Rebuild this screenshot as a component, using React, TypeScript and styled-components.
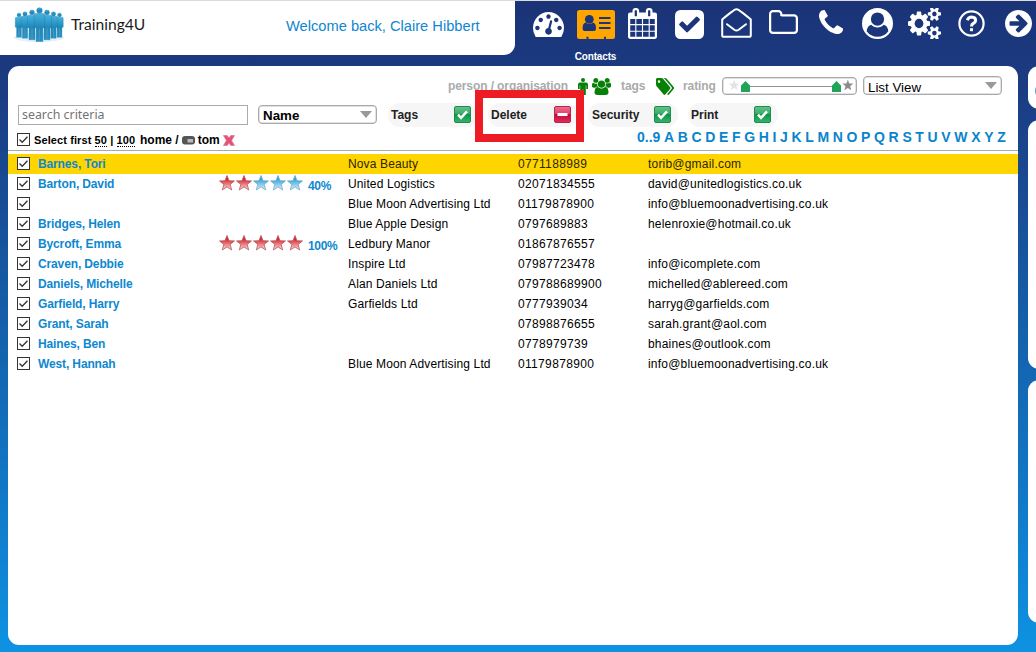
import React from 'react';
import styled, { createGlobalStyle } from 'styled-components';

const GlobalStyle = createGlobalStyle`
  * { box-sizing: border-box; }
  html, body { margin: 0; padding: 0; }
  body { font-family: 'Liberation Sans', Arial, sans-serif; font-size: 12px; color: #000; overflow: hidden; }
`;

const Page = styled.div`
  width: 1036px;
  height: 652px;
  overflow: hidden;
  display: flex;
  flex-direction: column;
  border-top: 1px solid #dcdcdc;
  background: linear-gradient(180deg, #1b3377 0%, #1b3c83 14%, #1461ac 51%, #1178c6 75%, #0e92e2 100%);
`;

const Header = styled.header`
  display: flex;
  height: 65px;
  flex: none;
`;

const BrandBar = styled.div`
  display: flex;
  flex: none;
  align-items: flex-start;
  width: 515px;
  height: 54px;
  padding-left: 12px;
  background: #fff;
  border-bottom-right-radius: 11px;
`;

const BrandName = styled.div`
  width: 219px;
  padding: 13px 0 0 4px;
  font-family: Lato, 'Liberation Sans', sans-serif;
  font-size: 15.6px;
  line-height: 20px;
  color: #1c1c1c;
`;

const Welcome = styled.div`
  padding-top: 16px;
  font-size: 14.67px;
  line-height: 18px;
  color: #0f86cf;
  white-space: nowrap;
`;

const Nav = styled.nav`
  display: flex;
  padding-left: 10px;
`;

const NavItem = styled.a<{ $active?: boolean }>`
  width: 47px;
  flex: none;
  display: flex;
  flex-direction: column;
  align-items: center;
  color: ${(p) => (p.$active ? '#ffa500' : '#fff')};
`;

const NavIcon = styled.span<{ $top: number }>`
  display: block;
  height: 50px;
  padding-top: ${(p) => p.$top}px;
  svg { display: block; }
`;

const NavLabel = styled.span`
  font-size: 10px;
  font-weight: bold;
  line-height: 12px;
  letter-spacing: -0.15px;
  color: #fff;
`;

const Body = styled.div`
  display: flex;
  gap: 10px;
  padding-left: 8px;
`;

const Panel = styled.main`
  width: 1010px;
  height: 579px;
  flex: none;
  background: #fff;
  border-radius: 11px;
`;

const Side = styled.aside`
  display: flex;
  flex-direction: column;
  gap: 11px;
`;

const SideCard = styled.div<{ $h: number }>`
  width: 60px;
  height: ${(p) => p.$h}px;
  background: #fff;
  border-radius: 11px;
`;

const SideMark = styled.div`
  width: 16px;
  height: 16px;
  margin: 17px 0 0 7px;
  border: 2px solid #5d9cc4;
  border-radius: 8px;
`;

const FilterRow = styled.div`
  display: flex;
  align-items: flex-start;
  height: 33px;
  padding-left: 440px;
`;

const FilterLabel = styled.span<{ $w: number }>`
  width: ${(p) => p.$w}px;
  flex: none;
  padding-top: 13px;
  font-weight: bold;
  line-height: 14px;
  letter-spacing: -0.1px;
  color: #aaa;
  white-space: nowrap;
`;

const FilterIcon = styled.span<{ $w: number }>`
  width: ${(p) => p.$w}px;
  flex: none;
  padding-top: 12px;
  color: #078007;
  svg { display: block; }
`;

const SelectBox = styled.div<{ $w: number; $top?: number; $bold?: boolean }>`
  width: ${(p) => p.$w}px;
  flex: none;
  height: 19px;
  margin-top: ${(p) => p.$top || 0}px;
  padding: 1px 4px 0;
  display: flex;
  justify-content: space-between;
  border: 1px solid #a9a9a9;
  border-radius: 4px;
  box-shadow: inset 0 0 0 0.5px #c4c4c4;
  font-size: 13.33px;
  line-height: ${(p) => (p.$bold ? 18 : 19)}px;
  font-weight: ${(p) => (p.$bold ? 'bold' : 'normal')};
`;

const Caret = styled.span`
  width: 0;
  height: 0;
  margin: 4px 0 0;
  border-left: 6px solid transparent;
  border-right: 6px solid transparent;
  border-top: 7px solid #999;
`;

const Slider = styled.div`
  width: 135px;
  flex: none;
  height: 18px;
  margin: 11px 6px 0 0;
  border: 1px solid #a9a9a9;
  border-radius: 4px;
  box-shadow: inset 0 0 0 0.5px #c4c4c4;
  svg { display: block; }
`;

const Toolbar = styled.div`
  position: relative;
  display: flex;
  align-items: center;
  height: 31px;
  padding-left: 10px;
`;

const Search = styled.div`
  width: 230px;
  height: 20px;
  margin-right: 10px;
  padding-left: 3px;
  border: 1px solid #ababab;
  font-family: 'Noto Sans', 'Open Sans', sans-serif;
  font-size: 12.4px;
  line-height: 18px;
  color: #757575;
`;

const Action = styled.div<{ $first?: boolean; $indent?: number }>`
  display: flex;
  align-items: center;
  justify-content: space-between;
  width: 90px;
  height: 24px;
  margin-left: ${(p) => (p.$first ? 11 : 10)}px;
  padding: 0 7px 0 ${(p) => p.$indent || 3}px;
  border-radius: 12px;
  background: #f6f6f6;
  font-weight: bold;
  color: #222;
  svg { display: block; }
`;

const Highlight = styled.div`
  position: absolute;
  left: 467px;
  top: -9px;
  width: 109px;
  height: 52px;
  border: 8px solid #ed1c24;
`;

const SelectRow = styled.div`
  display: flex;
  height: 21px;
  padding-left: 9px;
  border-bottom: 1px solid #a8a8a8;
  font-weight: bold;
  line-height: 20px;
  white-space: nowrap;
`;

const SelectFirst = styled.div`
  width: 110px;
  flex: none;
  padding-left: 4px;
  font-size: 11px;
  letter-spacing: 0.1px;
  u { text-decoration: none; border-bottom: 1px dotted #000; }
`;

const Crumbs = styled.div`
  display: flex;
  flex: none;
  align-items: center;
  gap: 3px;
  width: 497px;
`;

const Letters = styled.div`
  display: flex;
  flex: none;
  justify-content: space-between;
  width: 369px;
  margin-top: -3px;
  font-size: 14px;
  color: #0a84cc;
`;

const List = styled.div`
  margin-top: 3px;
`;

const Row = styled.div<{ $selected?: boolean }>`
  display: grid;
  grid-template-columns: 21px 181px 89px 40px 170px 130px 1fr;
  height: 20px;
  padding-left: 9px;
  line-height: 20px;
  white-space: nowrap;
  background: ${(p) => (p.$selected ? '#ffd500' : 'transparent')};
  color: ${(p) => (p.$selected ? '#2b2500' : '#000')};
`;

const Check = styled.span`
  display: block;
  width: 13px;
  height: 13px;
  margin-top: 3px;
  flex: none;
  svg { display: block; }
`;

const Name = styled.span`
  font-weight: bold;
  letter-spacing: -0.13px;
  color: #0d88d0;
`;

const Cell = styled.span<{ $track: number }>`
  letter-spacing: ${(p) => p.$track}px;
`;

const Percent = styled(Name)`
  line-height: 24px;
  letter-spacing: -0.3px;
`;

const Stars = styled.span`
  display: flex;
  gap: 1px;
  padding-top: 1px;
`;

type GlyphProps = { w: number; h: number; box: string; d: string };
const Glyph = ({ w, h, box, d }: GlyphProps) => (
  <svg width={w} height={h} viewBox={box} preserveAspectRatio="none" fill="currentColor"><path fillRule="evenodd" d={d} /></svg>
);

const TACH = 'M384 1152q0-53-37.5-90.5t-90.5-37.5-90.5 37.5-37.5 90.5 37.5 90.5 90.5 37.5 90.5-37.5 37.5-90.5zm192-448q0-53-37.5-90.5t-90.5-37.5-90.5 37.5-37.5 90.5 37.5 90.5 90.5 37.5 90.5-37.5 37.5-90.5zm428 481l101-382q6-26-7.5-48.5t-38.5-29.5-48 6.5-30 39.5l-101 382q-60 5-107 43.5t-63 98.5q-20 77 20 146t117 89 146-20 89-117q16-60-6-117t-72-91zm660-33q0-53-37.5-90.5t-90.5-37.5-90.5 37.5-37.5 90.5 37.5 90.5 90.5 37.5 90.5-37.5 37.5-90.5zm-640-640q0-53-37.5-90.5t-90.5-37.5-90.5 37.5-37.5 90.5 37.5 90.5 90.5 37.5 90.5-37.5 37.5-90.5zm448 192q0-53-37.5-90.5t-90.5-37.5-90.5 37.5-37.5 90.5 37.5 90.5 90.5 37.5 90.5-37.5 37.5-90.5zm320 448q0 261-141 483-19 29-54 29h-1402q-35 0-54-29-141-221-141-483 0-182 71-348t191-286 286-191 348-71 348 71 286 191 191 286 71 348z';
const CAL = 'M192 1664h288v-288h-288v288zm352 0h320v-288h-320v288zm-352-352h288v-320h-288v320zm352 0h320v-320h-320v320zm-352-384h288v-288h-288v288zm736 736h320v-288h-320v288zm-384-736h320v-288h-320v288zm768 736h288v-288h-288v288zm-384-352h320v-320h-320v320zm-352-864v-288q0-13-9.5-22.5t-22.5-9.5h-64q-13 0-22.5 9.5t-9.5 22.5v288q0 13 9.5 22.5t22.5 9.5h64q13 0 22.5-9.5t9.5-22.5zm736 864h288v-320h-288v320zm-384-384h320v-288h-320v288zm384 0h288v-288h-288v288zm32-480v-288q0-13-9.5-22.5t-22.5-9.5h-64q-13 0-22.5 9.5t-9.5 22.5v288q0 13 9.5 22.5t22.5 9.5h64q13 0 22.5-9.5t9.5-22.5zm384-64v1280q0 52-38 90t-90 38h-1408q-52 0-90-38t-38-90v-1280q0-52 38-90t90-38h128v-96q0-66 47-113t113-47h64q66 0 113 47t47 113v96h384v-96q0-66 47-113t113-47h64q66 0 113 47t47 113v96h128q52 0 90 38t38 90z';
const CHECKSQ = 'M813 1299l614-614q19-19 19-45t-19-45l-102-102q-19-19-45-19t-45 19l-467 467-211-211q-19-19-45-19t-45 19l-102 102q-19 19-19 45t19 45l358 358q19 19 45 19t45-19zm851-883v960q0 119-84.5 203.5t-203.5 84.5h-960q-119 0-203.5-84.5t-84.5-203.5v-960q0-119 84.5-203.5t203.5-84.5h960q119 0 203.5 84.5t84.5 203.5z';
const FOLDER = 'M1600 1312v-704q0-40-28-68t-68-28h-704q-40 0-68-28t-28-68v-64q0-40-28-68t-68-28h-320q-40 0-68 28t-28 68v960q0 40 28 68t68 28h1216q40 0 68-28t28-68zm128-704v704q0 92-66 158t-158 66h-1216q-92 0-158-66t-66-158v-960q0-92 66-158t158-66h320q92 0 158 66t66 158v32h672q92 0 158 66t66 158z';
const PHONE = 'M1600 1240q0 27-10 70.5t-21 68.5q-21 50-122 106-94 51-186 51-27 0-53-3.5t-57.5-12.5-47-14.5-55.5-20.5-49-18q-98-35-175-83-127-79-264-216t-216-264q-48-77-83-175-3-9-18-49t-20.5-55.5-14.5-47-12.5-57.5-3.5-53q0-92 51-186 56-101 106-122 25-11 68.5-21t70.5-10q14 0 21 3 18 6 53 76 11 19 30 54t35 63.5 31 53.5q3 4 17.5 25t21.5 35.5 7 28.5q0 20-28.5 50t-62 55-62 53-28.5 46q0 9 5 22.5t8.5 20.5 14 24 11.5 19q76 137 174 235t235 174q2 1 19 11.5t24 14 20.5 8.5 22.5 5q18 0 46-28.5t53-62 55-62 50-28.5q14 0 28.5 7t35.5 21.5 25 17.5q25 15 53.5 31t63.5 35 54 30q70 35 76 53 3 7 3 21z';
const USER = 'M1523 1339q-22-155-87.5-257.5t-184.5-118.5q-67 74-159.5 115.5t-195.5 41.5-195.5-41.5-159.5-115.5q-119 16-184.5 118.5t-87.5 257.5q106 150 271 237.5t356 87.5 356-87.5 271-237.5zm-243-699q0-159-112.5-271.5t-271.5-112.5-271.5 112.5-112.5 271.5 112.5 271.5 271.5 112.5 271.5-112.5 112.5-271.5zM896 0a896 896 0 1 0 0 1792a896 896 0 1 0 0-1792z';
const COGS = 'M832 896q0-106-75-181t-181-75-181 75-75 181 75 181 181 75 181-75 75-181zm768 512q0-52-38-90t-90-38-90 38-38 90q0 53 37.5 90.5t90.5 37.5 90.5-37.5 37.5-90.5zm0-1024q0-52-38-90t-90-38-90 38-38 90q0 53 37.5 90.5t90.5 37.5 90.5-37.5 37.5-90.5zm-384 421v185q0 10-7 19.5t-16 10.5l-155 24q-11 35-32 76 34 48 90 115 7 11 7 20 0 12-7 19-23 30-82.5 89.5t-78.5 59.5q-11 0-21-7l-115-90q-37 19-77 31-11 108-23 155-7 24-30 24h-186q-11 0-20-7.5t-10-17.5l-23-153q-34-10-75-31l-118 89q-7 7-20 7-11 0-21-8-144-133-144-160 0-9 7-19 10-14 41-53t47-61q-23-44-35-82l-152-24q-10-1-17-9.5t-7-19.5v-185q0-10 7-19.5t16-10.5l155-24q11-35 32-76-34-48-90-115-7-11-7-20 0-12 7-20 22-30 82-89t79-59q11 0 21 7l115 90q34-18 77-32 11-108 23-154 7-24 30-24h186q11 0 20 7.5t10 17.5l23 153q34 10 75 31l118-89q8-7 20-7 11 0 21 8 144 133 144 160 0 8-7 19-12 16-42 54t-45 60q23 48 34 82l152 23q10 2 17 10.5t7 19.5zm640 533v140q0 16-149 31-12 27-30 52 51 113 51 138 0 4-4 7-122 71-124 71-8 0-46-47t-52-68q-20 2-30 2t-30-2q-14 21-52 68t-46 47q-2 0-124-71-4-3-4-7 0-25 51-138-18-25-30-52-149-15-149-31v-140q0-16 149-31 13-29 30-52-51-113-51-138 0-4 4-7 4-2 35-20t59-34 30-16q8 0 46 46.5t52 67.5q20-2 30-2t30 2q51-71 92-112l6-2q4 0 124 70 4 3 4 7 0 25-51 138 17 23 30 52 149 15 149 31zm0-1024v140q0 16-149 31-12 27-30 52 51 113 51 138 0 4-4 7-122 71-124 71-8 0-46-47t-52-68q-20 2-30 2t-30-2q-14 21-52 68t-46 47q-2 0-124-71-4-3-4-7 0-25 51-138-18-25-30-52-149-15-149-31v-140q0-16 149-31 13-29 30-52-51-113-51-138 0-4 4-7 4-2 35-20t59-34 30-16q8 0 46 46.5t52 67.5q20-2 30-2t30 2q51-71 92-112l6-2q4 0 124 70 4 3 4 7 0 25-51 138 17 23 30 52 149 15 149 31z';
const ARROW = 'M1413 896q0-27-18-45l-91-91-362-362q-18-18-45-18t-45 18l-91 91q-18 18-18 45t18 45l189 189h-502q-26 0-45 19t-19 45v128q0 26 19 45t45 19h502l-189 189q-19 19-19 45t19 45l91 91q18 18 45 18t45-18l362-362 91-91q18-18 18-45zm251 0q0 209-103 385.5t-279.5 279.5-385.5 103-385.5-103-279.5-279.5-103-385.5 103-385.5 279.5-279.5 385.5-103 385.5 103 279.5 279.5 103 385.5z';
const USERS = 'M593 896q-162 5-265 128h-134q-82 0-138-40.5t-56-118.5q0-353 124-353 6 0 43.5 21t97.5 42.5 119 21.5q67 0 133-23-5 37-5 66 0 159 93 287zm1071 637q0 120-73 189.5t-194 69.5h-874q-121 0-194-69.5t-73-189.5q0-53 3.5-103.5t14-109 26.5-108.5 43-97.5 62-81 85.5-53.5 111.5-20q10 0 43 21.5t73 48 107 48 135 21.5 135-21.5 107-48 73-48 43-21.5q61 0 111.5 20t85.5 53.5 62 81 43 97.5 26.5 108.5 14 109 3.5 103.5zm-1024-1277q0 106-75 181t-181 75-181-75-75-181 75-181 181-75 181 75 75 181zm704 384q0 159-112.5 271.5t-271.5 112.5-271.5-112.5-112.5-271.5 112.5-271.5 271.5-112.5 271.5 112.5 112.5 271.5zm576 225q0 78-56 118.5t-138 40.5h-134q-103-123-265-128 93-128 93-287 0-29-5-66 66 23 133 23 59 0 119-21.5t97.5-42.5 43.5-21q124 0 124 353zm-128-609q0 106-75 181t-181 75-181-75-75-181 75-181 181-75 181 75 75 181z';
const TAGS = 'M448 448q0-53-37.5-90.5t-90.5-37.5-90.5 37.5-37.5 90.5 37.5 90.5 90.5 37.5 90.5-37.5 37.5-90.5zm1067 576q0 53-37 90l-491 492q-39 37-91 37-53 0-90-37l-715-716q-38-37-64.5-101t-26.5-117v-416q0-52 38-90t90-38h416q53 0 117 26.5t102 64.5l715 714q37 39 37 91zm384 0q0 53-37 90l-491 492q-39 37-91 37-36 0-59-14t-53-45l470-470q37-37 37-90 0-52-37-91l-715-714q-38-38-102-64.5t-117-26.5h224q53 0 117 26.5t102 64.5l715 714q37 39 37 91z';

const ContactCard = () => (
  <svg width="38" height="29" viewBox="0 0 38 29">
    <path fill="#ffa500" d="M2.5 0h33A2.5 2.5 0 0 1 38 2.500V26.500A2.500 2.500 0 0 1 35.500 29H29v-2.200h-2V29H11.500v-2.200h-2V29h-7A2.500 2.500 0 0 1 0 26.500v-24A2.500 2.500 0 0 1 2.500 0z" />
    <g fill="#1b3579">
      <circle cx="12.300" cy="9.300" r="4.400" />
      <path d="M8.600 12.600q3.700 3 7.400 0 3 .8 3 5.600 0 2.800-2.300 2.800H8q-2.400 0-2.400-2.800 0-4.800 3-5.600z" />
      <path d="M22 7h11.500v2H22zM22 12h11.500v2H22zM22 17h11.500v2H22z" />
    </g>
  </svg>
);

const OpenEnvelope = () => (
  <svg width="31" height="30" viewBox="0 0 31 30" fill="none" stroke="currentColor" strokeWidth="2" strokeLinejoin="round" strokeLinecap="round">
    <path d="M1.200 11.500C5 8 9 5.200 13.200 2q2.300-1.700 4.600 0C22 5.200 26 8 29.800 11.500V27.200q0 1.600-1.600 1.600H2.800q-1.600 0-1.600-1.600z" />
    <path d="M6 16.200l7.300 5.600q2.200 1.600 4.400 0L25 16.200" />
  </svg>
);

const Question = () => (
  <svg width="27" height="27" viewBox="0 0 27 27" fill="none" stroke="currentColor">
    <circle cx="13.500" cy="13.500" r="12.100" strokeWidth="2.200" />
    <path d="M9.300 10.300q1.300-3.200 4.300-3.200 4 .2 4 3.400 0 1.700-2.200 2.900-1.900 1.100-1.900 3" strokeWidth="3" />
    <path d="M12 18.200h3v3h-3z" fill="currentColor" stroke="none" />
  </svg>
);

const navItems: { top: number; active?: boolean; label?: string; icon: React.ReactNode }[] = [
  { top: 11, icon: <Glyph w={31} h={25} box="0 256 1792 1408" d={TACH} /> },
  { top: 9, active: true, label: 'Contacts', icon: <ContactCard /> },
  { top: 7, icon: <Glyph w={29} h={31} box="64 0 1664 1792" d={CAL} /> },
  { top: 9, icon: <Glyph w={29} h={29} box="128 128 1536 1536" d={CHECKSQ} /> },
  { top: 7, icon: <OpenEnvelope /> },
  { top: 9, icon: <Glyph w={29} h={24} box="64 128 1664 1408" d={FOLDER} /> },
  { top: 9, icon: <Glyph w={24} h={24} box="192 128 1408 1408" d={PHONE} /> },
  { top: 7, icon: <Glyph w={31} h={31} box="0 0 1792 1792" d={USER} /> },
  { top: 7, icon: <Glyph w={33} h={31} box="-64 64 1920 1664" d={COGS} /> },
  { top: 9, icon: <Question /> },
  { top: 9, icon: <Glyph w={27} h={27} box="128 128 1536 1536" d={ARROW} /> },
];

const crowd: [number, number, number][] = [
  [7, 14, 0.72], [13, 13, 0.78], [47.500, 14, 0.72], [41.500, 13, 0.78], [20, 11.500, 0.88], [35, 11.500, 0.88], [27.500, 9.500, 1],
];

const CrowdLogo = () => (
  <svg width="55" height="44" viewBox="0 0 55 44">
    <defs>
      <linearGradient id="crowd" x1="0" y1="0" x2="0" y2="1">
        <stop offset="0" stopColor="#45b2dd" />
        <stop offset="0.500" stopColor="#2088ba" />
        <stop offset="1" stopColor="#2a93c6" />
      </linearGradient>
    </defs>
    <ellipse cx="27" cy="36.500" rx="25" ry="4.500" fill="#e3f1f8" />
    {crowd.map(([x, y, s]) => (
      <g key={x} transform={`translate(${x} ${y}) scale(${s})`} fill="url(#crowd)" stroke="#187ba9" strokeWidth="0.400">
        <path d="M-4 3h8q1.200 0 1.200 1.500V17H3.400v14H.2V18h-.4v13h-3.200V17h-1.800V4.500Q-5.200 3-4 3z" />
        <circle cx="0" cy="0" r="2.800" />
      </g>
    ))}
  </svg>
);

const Person = () => (
  <svg width="10" height="17" viewBox="0 0 10 17" fill="currentColor">
    <circle cx="5" cy="2" r="2" />
    <path d="M2 4.500h6q2 0 2 2V11H8.300V7.500h-.5V17H5.300v-5.500h-.6V17H2.200V7.500h-.5V11H0V6.500q0-2 2-2z" />
  </svg>
);

const STAR = 'M8 .5l2 5.200 5.500.2-4.300 3.500 1.500 5.600L8 11.900 3.300 15l1.500-5.600L.5 5.900 6 5.700z';

const StarIcon = ({ on }: { on: boolean }) => (
  <svg width="16" height="16" viewBox="0 0 16 16">
    <defs>
      <linearGradient id={on ? 'starOn' : 'starOff'} x1="0" y1="0" x2="0" y2="1">
        <stop offset="0.250" stopColor={on ? '#d8262c' : '#2fa3dc'} />
        <stop offset="1" stopColor={on ? '#fbe3e1' : '#e6f5fc'} />
      </linearGradient>
    </defs>
    <path d={STAR} fill={on ? 'url(#starOn)' : 'url(#starOff)'} stroke={on ? '#b8575a' : '#6fa9c6'} strokeWidth="0.800" />
  </svg>
);

const ActionIcon = ({ remove }: { remove?: boolean }) => (
  <svg width="17" height="17" viewBox="0 0 17 17">
    <defs>
      <linearGradient id={remove ? 'badgeRed' : 'badgeGreen'} x1="0" y1="0" x2="0" y2="1">
        <stop offset="0" stopColor={remove ? '#ee6f8d' : '#63c38a'} />
        <stop offset="0.450" stopColor={remove ? '#e0446c' : '#3bab69'} />
        <stop offset="0.500" stopColor={remove ? '#c9063c' : '#0a9446'} />
        <stop offset="1" stopColor={remove ? '#dd2f5c' : '#35b56b'} />
      </linearGradient>
    </defs>
    <rect x="0.500" y="0.500" width="16" height="16" rx="1.500" fill={remove ? 'url(#badgeRed)' : 'url(#badgeGreen)'} stroke={remove ? '#b8244c' : '#218a50'} />
    {remove
      ? <path d="M3.500 7h10v3h-10z" fill="#fff" />
      : <path d="M4 8.700l3 3.200 6-6.600" fill="none" stroke="#fff" strokeWidth="2.500" />}
  </svg>
);

const CheckBox = () => (
  <Check>
    <svg width="13" height="13" viewBox="0 0 13 13">
      <rect x="0.500" y="0.500" width="12" height="12" fill="#fff" stroke="#333" />
      <path d="M2.500 6.500l2.700 2.700 5.300-5.500" fill="none" stroke="#333" strokeWidth="1.300" />
    </svg>
  </Check>
);

const SliderTrack = () => (
  <svg width="133" height="16" viewBox="0 0 133 16">
    <path d="M27 8.500h83" stroke="#8f9a8c" />
    <path d={STAR} fill="#e3e3e3" transform="translate(5.500 1.500) scale(.7)" />
    <path d={STAR} fill="#8c8c8c" transform="translate(119 1.300) scale(.73)" />
    <path d="M18 14V7.500L22.500 3 27 7.500V14zM109 14V7.500L113.500 3 118 7.500V14z" fill="#1fa45a" />
  </svg>
);

const KeyTag = () => (
  <svg width="13" height="9" viewBox="0 0 13 9">
    <rect width="13" height="8.500" rx="3" fill="#555" />
    <rect x="5.500" y="3" width="5.500" height="3.500" fill="#bbb" />
  </svg>
);

const Cross = () => (
  <svg width="12" height="11" viewBox="0 0 12 11">
    <path d="M.5.500h3.700L6 3 7.800.5h3.700L8.600 5.500l2.900 5H7.800L6 8l-1.800 2.500H.5l2.900-5z" fill="#e8507a" stroke="#dc7d93" strokeWidth="0.800" />
  </svg>
);

const contacts: { name: string; stars?: number; org?: string; tel: string; mail?: string }[] = [
  { name: 'Barnes, Tori', org: 'Nova Beauty', tel: '0771188989', mail: 'torib@gmail.com' },
  { name: 'Barton, David', stars: 2, org: 'United Logistics', tel: '02071834555', mail: 'david@unitedlogistics.co.uk' },
  { name: '', org: 'Blue Moon Advertising Ltd', tel: '01179878900', mail: 'info@bluemoonadvertising.co.uk' },
  { name: 'Bridges, Helen', org: 'Blue Apple Design', tel: '0797689883', mail: 'helenroxie@hotmail.co.uk' },
  { name: 'Bycroft, Emma', stars: 5, org: 'Ledbury Manor', tel: '01867876557' },
  { name: 'Craven, Debbie', org: 'Inspire Ltd', tel: '07987723478', mail: 'info@icomplete.com' },
  { name: 'Daniels, Michelle', org: 'Alan Daniels Ltd', tel: '079788689900', mail: 'michelled@ablereed.com' },
  { name: 'Garfield, Harry', org: 'Garfields Ltd', tel: '0777939034', mail: 'harryg@garfields.com' },
  { name: 'Grant, Sarah', tel: '07898876655', mail: 'sarah.grant@aol.com' },
  { name: 'Haines, Ben', tel: '0778979739', mail: 'bhaines@outlook.com' },
  { name: 'West, Hannah', org: 'Blue Moon Advertising Ltd', tel: '01179878900', mail: 'info@bluemoonadvertising.co.uk' },
];

const alphabet = ['0..9', ...'ABCDEFGHIJKLMNOPQRSTUVWXYZ'];

export default function App() {
  return (
    <>
      <GlobalStyle />
      <Page>
        <Header>
          <BrandBar>
            <CrowdLogo />
            <BrandName>Training4U</BrandName>
            <Welcome>Welcome back, Claire Hibbert</Welcome>
          </BrandBar>
          <Nav>
            {navItems.map((item, i) => (
              <NavItem key={i} $active={item.active}>
                <NavIcon $top={item.top}>{item.icon}</NavIcon>
                {item.label && <NavLabel>{item.label}</NavLabel>}
              </NavItem>
            ))}
          </Nav>
        </Header>
        <Body>
          <Panel>
            <FilterRow>
              <FilterLabel $w={130}>person / organisation</FilterLabel>
              <FilterIcon $w={14}><Person /></FilterIcon>
              <FilterIcon $w={29}><Glyph w={19} h={17} box="0 0 1920 1792" d={USERS} /></FilterIcon>
              <FilterLabel $w={35}>tags</FilterLabel>
              <FilterIcon $w={27}><Glyph w={18} h={17} box="0 128 1899 1515" d={TAGS} /></FilterIcon>
              <FilterLabel $w={39}>rating</FilterLabel>
              <Slider><SliderTrack /></Slider>
              <SelectBox $w={139} $top={10}>List View<Caret /></SelectBox>
            </FilterRow>
            <Toolbar>
              <Search>search criteria</Search>
              <SelectBox $w={119} $bold>Name<Caret /></SelectBox>
              <Action $first>Tags<ActionIcon /></Action>
              <Action>Delete<ActionIcon remove /></Action>
              <Action $indent={4}>Security<ActionIcon /></Action>
              <Action>Print<ActionIcon /></Action>
              <Highlight />
            </Toolbar>
            <SelectRow>
              <CheckBox />
              <SelectFirst>Select first <u>50</u> | <u>100</u></SelectFirst>
              <Crumbs><span>home /</span><KeyTag /><span>tom</span><Cross /></Crumbs>
              <Letters>{alphabet.map((l) => <span key={l}>{l}</span>)}</Letters>
            </SelectRow>
            <List>
              {contacts.map((c, i) => (
                <Row key={i} $selected={i === 0}>
                  <CheckBox />
                  <Name>{c.name}</Name>
                  <Stars>{c.stars && [0, 1, 2, 3, 4].map((n) => <StarIcon key={n} on={n < c.stars!} />)}</Stars>
                  <Percent>{c.stars && `${c.stars * 20}%`}</Percent>
                  <Cell $track={0.13}>{c.org}</Cell>
                  <Cell $track={0.33}>{c.tel}</Cell>
                  <Cell $track={0.2}>{c.mail}</Cell>
                </Row>
              ))}
            </List>
          </Panel>
          <Side>
            <SideCard $h={43}><SideMark /></SideCard>
            <SideCard $h={249}></SideCard>
            <SideCard $h={243}></SideCard>
          </Side>
        </Body>
      </Page>
    </>
  );
}
